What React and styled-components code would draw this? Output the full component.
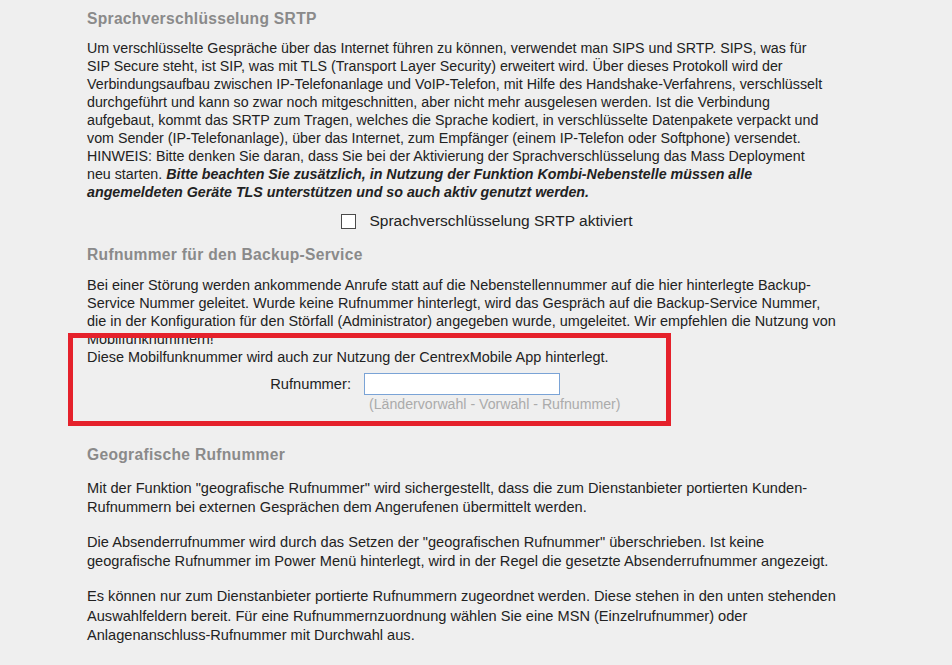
import React from "react"
import styled, { createGlobalStyle } from "styled-components"

const GlobalStyle = createGlobalStyle`
  html, body {
    margin: 0;
    padding: 0;
    background: #efefef;
  }
  body {
    font-family: "Liberation Sans", Arial, sans-serif;
    color: #222222;
  }
`

const Page = styled.div`
  width: 800px;
  padding: 9px 0 20px 87px;
  font-size: 14px;
  line-height: 18px;
`

const Heading = styled.h3`
  margin: ${p => p.$top || 0}px 0 ${p => p.$bottom || 10}px 0;
  font-size: 15.6px;
  letter-spacing: 0.3px;
  line-height: 20px;
  font-weight: bold;
  color: #8a8a8a;
`

const Text = styled.p`
  margin: 0 0 ${p => p.$bottom || 0}px 0;
  font-size: ${p => p.$size || 14}px;
  line-height: ${p => p.$lh || 18}px;
  white-space: nowrap;
`

const Strong = styled.b`
  font-style: italic;
`

const CheckRow = styled.label`
  display: flex;
  justify-content: center;
  align-items: center;
  gap: 13px;
  margin-top: 11px;
  height: 18px;
  font-size: 15.5px;
`

const Box = styled.span`
  width: 13px;
  height: 13px;
  border: 1px solid #4a4a4a;
  background: #ffffff;
`

const Marked = styled.div`
  position: relative;

  &::after {
    content: "";
    position: absolute;
    left: -19px;
    top: -15px;
    width: 593px;
    height: 83px;
    border: 5px solid #e5212b;
    pointer-events: none;
  }
`

const FormRow = styled.div`
  display: grid;
  grid-template-columns: 264px 196px;
  column-gap: 13px;
  align-items: center;
  margin-top: 7px;
`

const Label = styled.span`
  text-align: right;
  font-size: 14.7px;
`

const Input = styled.input`
  box-sizing: border-box;
  width: 196px;
  height: 22px;
  margin: 0;
  border: 1px solid #7aa3d6;
  background: #ffffff;
  font: inherit;
`

const Hint = styled.div`
  grid-column: 2;
  padding-left: 5px;
  font-size: 14.15px;
  color: #ababab;
  white-space: nowrap;
`

export default function App() {
  return (
    <>
      <GlobalStyle />
      <Page>
        <Heading $bottom={10}>Sprachverschlüsselung SRTP</Heading>
        <Text $size={14.25}>
          Um verschlüsselte Gespräche über das Internet führen zu können, verwendet man SIPS und SRTP. SIPS, was für<br />
          SIP Secure steht, ist SIP, was mit TLS (Transport Layer Security) erweitert wird. Über dieses Protokoll wird der<br />
          Verbindungsaufbau zwischen IP-Telefonanlage und VoIP-Telefon, mit Hilfe des Handshake-Verfahrens, verschlüsselt<br />
          durchgeführt und kann so zwar noch mitgeschnitten, aber nicht mehr ausgelesen werden. Ist die Verbindung<br />
          aufgebaut, kommt das SRTP zum Tragen, welches die Sprache kodiert, in verschlüsselte Datenpakete verpackt und<br />
          vom Sender (IP-Telefonanlage), über das Internet, zum Empfänger (einem IP-Telefon oder Softphone) versendet.<br />
          HINWEIS: Bitte denken Sie daran, dass Sie bei der Aktivierung der Sprachverschlüsselung das Mass Deployment<br />
          neu starten. <Strong>Bitte beachten Sie zusätzlich, in Nutzung der Funktion Kombi-Nebenstelle müssen alle<br />
          angemeldeten Geräte TLS unterstützen und so auch aktiv genutzt werden.</Strong>
        </Text>
        <CheckRow>
          <Box />
          <span>Sprachverschlüsselung SRTP aktiviert</span>
        </CheckRow>

        <Heading $top={15} $bottom={11}>Rufnummer für den Backup-Service</Heading>
        <Text $size={14.45}>
          Bei einer Störung werden ankommende Anrufe statt auf die Nebenstellennummer auf die hier hinterlegte Backup-<br />
          Service Nummer geleitet. Wurde keine Rufnummer hinterlegt, wird das Gespräch auf die Backup-Service Nummer,<br />
          die in der Konfiguration für den Störfall (Administrator) angegeben wurde, umgeleitet. Wir empfehlen die Nutzung von<br />
          Mobilfunknummern!
        </Text>
        <Marked>
          <Text $size={14.45}>Diese Mobilfunknummer wird auch zur Nutzung der CentrexMobile App hinterlegt.</Text>
          <FormRow>
            <Label>Rufnummer:</Label>
            <Input type="text" />
            <Hint>(Ländervorwahl - Vorwahl - Rufnummer)</Hint>
          </FormRow>
        </Marked>

        <Heading $top={32} $bottom={14}>Geografische Rufnummer</Heading>
        <Text $size={14.6} $lh={18.5} $bottom={17}>
          Mit der Funktion "geografische Rufnummer" wird sichergestellt, dass die zum Dienstanbieter portierten Kunden-<br />
          Rufnummern bei externen Gesprächen dem Angerufenen übermittelt werden.
        </Text>
        <Text $size={14.6} $lh={18.5} $bottom={17}>
          Die Absenderrufnummer wird durch das Setzen der "geografischen Rufnummer" überschrieben. Ist keine<br />
          geografische Rufnummer im Power Menü hinterlegt, wird in der Regel die gesetzte Absenderrufnummer angezeigt.
        </Text>
        <Text $size={14.6} $lh={19.5}>
          Es können nur zum Dienstanbieter portierte Rufnummern zugeordnet werden. Diese stehen in den unten stehenden<br />
          Auswahlfeldern bereit. Für eine Rufnummernzuordnung wählen Sie eine MSN (Einzelrufnummer) oder<br />
          Anlagenanschluss-Rufnummer mit Durchwahl aus.
        </Text>
      </Page>
    </>
  )
}
